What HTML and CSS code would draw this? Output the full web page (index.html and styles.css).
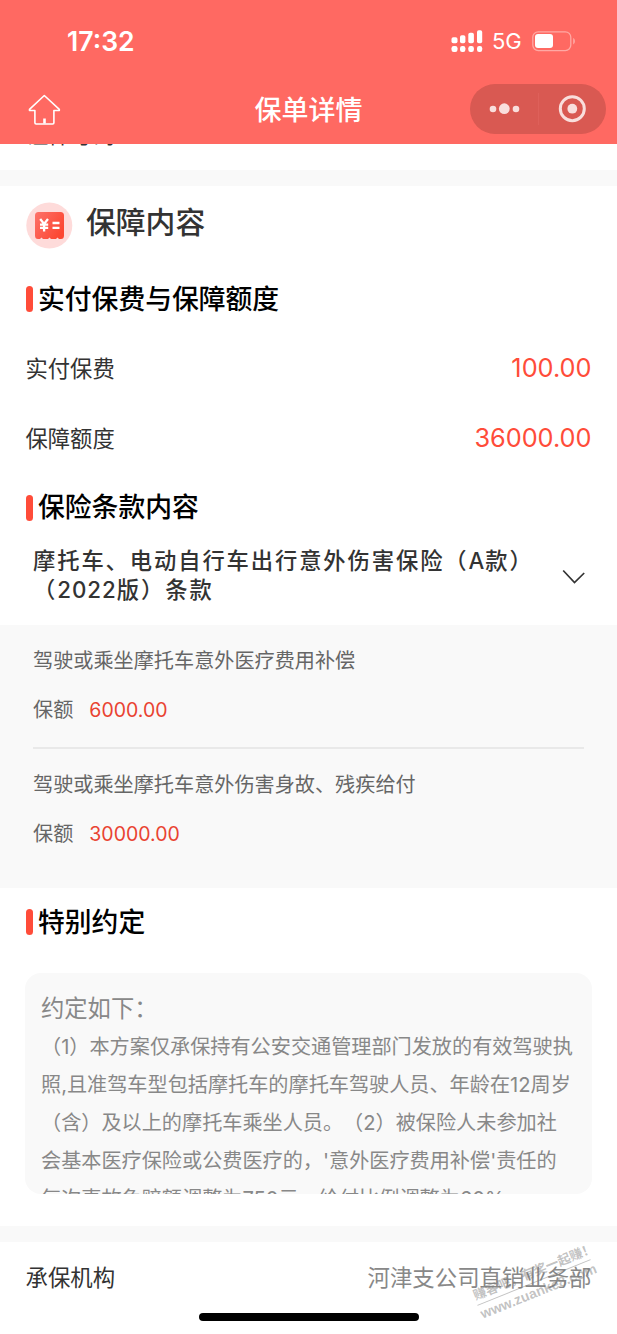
FILE: index.html
```html
<!DOCTYPE html>
<html lang="zh-CN">
<head>
<meta charset="utf-8">
<title>保单详情</title>
<link rel="stylesheet" href="styles.css">
</head>
<body>
<div class="screen">
  <header class="header">
    <div class="status">
      <span class="time">17:32</span>
      <div class="status-right">
        <svg class="signal" width="32" height="23" viewBox="0 0 32 23" fill="#fff">
          <rect x="0.5" y="7.3" width="6" height="6" rx="1.8"/><rect x="9" y="5.3" width="5.4" height="8" rx="1.8"/><rect x="17.3" y="2.8" width="5.6" height="10.5" rx="1.8"/><rect x="26" y="0.3" width="5.2" height="13" rx="1.8"/>
          <rect x="0.5" y="16" width="6" height="6" rx="2.2"/><rect x="9" y="16" width="5.4" height="6" rx="2.2"/><rect x="17.3" y="16" width="5.6" height="6" rx="2.2"/><rect x="26" y="16" width="5.2" height="6" rx="2.2"/>
        </svg>
        <span class="net">5G</span>
        <svg class="battery" width="44" height="21" viewBox="0 0 44 21">
          <rect x="0.8" y="0.8" width="38" height="18.8" rx="5.5" fill="none" stroke="#ffa9a4" stroke-width="1.3"/>
          <rect x="3" y="3" width="18" height="14" rx="3" fill="#fff"/>
          <path d="M41.2 7v6.4c2.300-1.200 2.300-5.200 0-6.400z" fill="#ffa9a4"/>
        </svg>
      </div>
    </div>
    <div class="navbar">
      <svg class="home" width="33" height="32" viewBox="0 0 33 32" fill="none" stroke="#fff" stroke-width="1.6" stroke-linejoin="round">
        <path d="M16.300 1.500L1.500 15.300v1.200h5.400v12.300q0 1.200 1.200 1.200h16.600q1.200 0 1.200-1.200V16.500h5.400v-1.200z"/>
        <path d="M16.500 24.500v5" stroke-width="2.600"/>
      </svg>
      <h1 class="nav-title">保单详情</h1>
      <div class="capsule">
        <svg width="136" height="50" viewBox="0 0 136 50" fill="#f9dedc">
          <circle cx="23" cy="25" r="3.300"/><circle cx="34.300" cy="24.700" r="5.400"/><circle cx="46" cy="25" r="3.300"/>
          <path d="M68.500 9v32" stroke="#de605a" stroke-width="1"/>
          <circle cx="102.300" cy="24.700" r="12" fill="none" stroke="#f9dedc" stroke-width="3"/><circle cx="102.300" cy="24.700" r="4.900"/>
        </svg>
      </div>
    </div>
  </header>
  <div class="clipped"><span>证件号码</span></div>
  <div class="gap"></div>
  <main>
    <div class="section-head">
      <svg width="47" height="47" viewBox="0 0 47 47">
        <defs><linearGradient id="ticket" x1="0" y1="0" x2="1" y2=".6"><stop offset="0" stop-color="#fd726a"/><stop offset="1" stop-color="#fc4732"/></linearGradient></defs>
        <circle cx="23.300" cy="23.500" r="23" fill="#fedbda"/>
        <path d="M12.500 10h22q3.500 0 3.500 3.500v20q0 3.500-3 3.500h-2l-1.500-1.500-1.500 1.500h-5l-1.500-1.500-1.500 1.500h-5l-1.500-1.500-1.500 1.500h-2q-3 0-3-3.500v-20q0-3.500 3.500-3.500z" fill="url(#ticket)"/>
        <path d="M14.200 17l3.900 5 3.900-5M18.100 21.500v8M14 22.600h8.200M14 25.800h8.200M26.500 21h7M26.500 25.800h7" stroke="#fff" stroke-width="2.300" fill="none"/>
      </svg>
      <h2>保障内容</h2>
    </div>
    <h3 class="sub sub-1"><i></i><span>实付保费与保障额度</span></h3>
    <div class="row"><span>实付保费</span><b>100.00</b></div>
    <div class="row"><span>保障额度</span><b>36000.00</b></div>
    <h3 class="sub sub-2"><i></i><span>保险条款内容</span></h3>
    <div class="clause">
      <p>摩托车、电动自行车出行意外伤害保险（<span class="latin">A</span>款）<br>（<span class="latin">2022</span>版）条款</p>
      <svg width="24" height="16" viewBox="0 0 24 16" fill="none" stroke="#333" stroke-width="1.700"><path d="M1.200 1.500L12.500 13.500 22.200 4"/></svg>
    </div>
    <div class="benefits">
      <div class="benefit">
        <p>驾驶或乘坐摩托车意外医疗费用补偿</p>
        <p class="amount">保额<b>6000.00</b></p>
      </div>
      <div class="benefit">
        <p>驾驶或乘坐摩托车意外伤害身故、残疾给付</p>
        <p class="amount">保额<b>30000.00</b></p>
      </div>
    </div>
    <h3 class="sub sub-3"><i></i><span>特别约定</span></h3>
    <div class="notice">
      <p class="lead">约定如下：</p>
      <p>（1）本方案仅承保持有公安交通管理部门发放的有效驾驶执<br>照,且准驾车型包括摩托车的摩托车驾驶人员、年龄在12周岁<br>（含）及以上的摩托车乘坐人员。（2）被保险人未参加社<br>会基本医疗保险或公费医疗的，'意外医疗费用补偿'责任的<br>每次事故免赔额调整为750元，给付比例调整为60%。</p>
    </div>
  </main>
  <div class="gap"></div>
  <footer class="org">
    <span>承保机构</span><span class="org-name">河津支公司直销业务部</span>
    <div class="watermark"><div>赚客吧，有奖一起赚！</div><div class="site">www.zuanke8.com</div></div>
    <div class="home-indicator"></div>
  </footer>
</div>
</body>
</html>
```
FILE: styles.css
```css
* { box-sizing: border-box; margin: 0; padding: 0; }
body { background: #fff; font-family: Inter, "Noto Sans CJK SC", sans-serif; color: #333; text-spacing-trim: space-all; }
h1, h2, h3 { font-weight: 500; }
b { font-weight: 400; }
svg { display: block; flex: none; }
.screen { width: 617px; height: 1334px; overflow: hidden; white-space: nowrap; }
.header { height: 144px; background: #ff6962; color: #fff; }
.status { height: 84px; display: flex; justify-content: space-between; padding: 25px 41px 0 67px; }
.time { font-size: 26.600px; line-height: 33px; font-weight: 600; }
.status-right { display: flex; align-items: flex-start; }
.signal { margin-top: 5px; }
.net { font-size: 22px; line-height: 33px; margin-left: 9px; width: 30px; }
.battery { margin: 6px 0 0 10px; }
.navbar { height: 60px; display: grid; grid-template-columns: 147px 1fr 147px; }
.home { margin: 10px 0 0 28px; }
.nav-title { text-align: center; font-size: 27px; line-height: 50px; padding-top: 2px; }
.capsule { width: 136px; height: 50px; border-radius: 25px; background: #d95952; }
.clipped { height: 26px; padding-left: 26px; }
.clipped span { height: 2px; overflow: hidden; font-size: 22.300px; line-height: 23px; display: flex; align-items: flex-end; }
.gap { height: 16px; background: #f9f9f9; }
.section-head { height: 80px; padding: 16px 26px 0; display: flex; gap: 13px; }
.section-head h2 { font-size: 29.800px; line-height: 44px; margin-top: -2px; }
.sub { display: flex; align-items: center; gap: 5px; padding-left: 26px; color: #000; font-size: 26.800px; }
.sub i { width: 7px; height: 26px; border-radius: 3.500px; background: #ff4c39; }
.sub span { padding-bottom: 4px; }
.sub-1 { height: 66px; }
.sub-2 { height: 71px; }
.sub-3 { height: 68px; }
.row { display: flex; justify-content: space-between; align-items: center; height: 70px; padding: 0 25.500px; font-size: 22.300px; }
.row b { font-size: 25.300px; color: #ff4c39; }
.clause { display: flex; justify-content: space-between; height: 82px; padding: 3px 31px 0 33px; }
.clause p { font-size: 22.300px; font-weight: 500; line-height: 29px; letter-spacing: 1.900px; }
.latin { letter-spacing: 1px; }
.clause svg { margin-top: 23px; }
.benefits { height: 263px; background: #f9f9f9; padding: 0 33px; color: #666; font-size: 20.150px; }
.benefit { height: 124px; padding-top: 21px; line-height: 30px; }
.benefit:first-child { border-bottom: 2px solid #e9e9e9; }
.amount { margin-top: 19px; }
.amount b { color: #e94331; margin-left: 16px; font-size: 19.500px; }
.notice { height: 221px; margin: 17px 25px 32px; padding: 17px 16px 0; background: #f9f9f9; border-radius: 16px; overflow: hidden; color: #888; font-size: 20.150px; line-height: 38px; }
.notice .lead { font-size: 23.300px; }
.org { height: 92px; display: flex; justify-content: space-between; padding: 0 25.500px; font-size: 22.400px; line-height: 72px; position: relative; }
.org-name { color: #888; }
.watermark { position: absolute; left: 473px; top: 22px; width: 122px; transform: rotate(-22deg); color: rgba(120,120,120,.45); font: 700 13px/18px "Liberation Sans", "Noto Sans CJK SC", sans-serif; }
.watermark .site { border-top: 1px solid; font-size: 14px; }
.home-indicator { position: absolute; left: 199px; top: 71px; width: 220px; height: 8px; border-radius: 4px; background: #000; }
```
